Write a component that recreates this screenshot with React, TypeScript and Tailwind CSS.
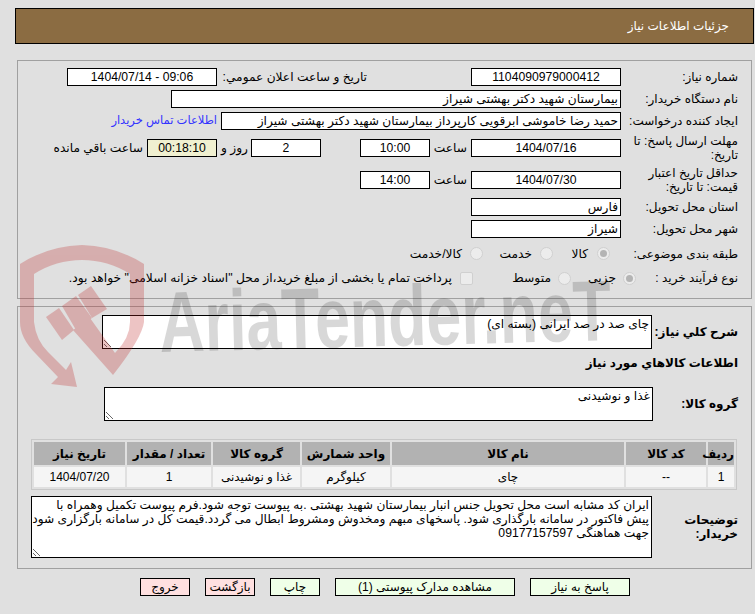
import React from 'react';

const font = { fontFamily: '"Liberation Sans", "DejaVu Sans", sans-serif' };

function Box({ value, w, center, bg, ltr }: { value: string; w: string; center?: boolean; bg?: string; ltr?: boolean }) {
  return (
    <input
      readOnly
      dir={ltr ? 'ltr' : undefined}
      value={value}
      className={`${w} h-[18px] shrink-0 border border-black px-[2px] text-[12.2px] leading-none text-black ${center ? 'text-center' : 'text-right'} ${bg ?? 'bg-white'}`}
    />
  );
}

function Row({ label, h, children }: { label: string; h: string; children?: React.ReactNode }) {
  return (
    <div className={`flex items-center ${h}`}>
      <div className="w-[117px] shrink-0 pl-[4px] text-[12px] leading-[14px] text-black">{label}</div>
      {children}
    </div>
  );
}

function Radio({ checked, className }: { checked?: boolean; className?: string }) {
  return (
    <span className={`flex h-[13px] w-[13px] shrink-0 items-center justify-center rounded-full border border-[#d0d0d0] bg-[#ececec] ${className ?? ''}`}>
      {checked && <span className="h-[7px] w-[7px] rounded-full bg-[#b4b4b4]" />}
    </span>
  );
}

function Btn({ label, w, pink, className }: { label: string; w: string; pink?: boolean; className?: string }) {
  return (
    <button className={`${w} h-[18px] border border-black text-[12px] leading-none text-black ${pink ? 'bg-[#ffe0e0]' : 'bg-[#efffe8]'} ${className ?? ''}`}>
      {label}
    </button>
  );
}

function Watermark() {
  return (
    <div dir="ltr" className="pointer-events-none absolute left-0 top-0">
      <svg width="755" height="614" viewBox="0 0 755 614">
        <g fill="#be2828" opacity="0.27">
          <path d="M20 264 Q48 246 82 245 Q116 246 144 264 L144 322 Q142 338 113 375 L73 330 L90 318 L115 353 Q130 338 130 322 L130 274 Q108 260 82 260 Q56 260 34 274 L34 322 Q36 340 48 352 L66 370 L71 362 L77 387 L51 384 L58 377 L36 354 Q20 338 20 322 Z" />
          <path d="M46 317 L59 308 L74 330 L62 340 Z" />
          <path d="M62 306 L76 296 L92 318 L76 330 Z" />
          <path d="M78 295 L91 286 L107 309 L92 318 Z" />
        </g>
        <text
          x="160"
          y="352"
          transform="rotate(-1.5 160 352)"
          textLength="452"
          lengthAdjust="spacingAndGlyphs"
          fontFamily="Liberation Sans, sans-serif"
          fontWeight="700"
          fontSize="86"
          fill="#000"
          opacity="0.15"
        >
          AriaTender.neT
        </text>
      </svg>
    </div>
  );
}

const cols = ['w-[26px]', 'w-[80px]', 'w-[232px]', 'w-[88px]', 'w-[87px]', 'w-[84px]', 'w-[91px]'];
const heads = ['ردیف', 'کد کالا', 'نام کالا', 'واحد شمارش', 'گروه کالا', 'تعداد / مقدار', 'تاریخ نیاز'];
const cells = ['1', '--', 'چای', 'کیلوگرم', 'غذا و نوشیدنی', '1', '1404/07/20'];

export default function App() {
  return (
    <div dir="rtl" style={font} className="relative h-[614px] w-[755px] overflow-hidden bg-[#e0e0e0]">
      <div className="mr-[1px] ml-[15px] pt-[8px]">
        <div className="flex h-[36px] items-center border border-black bg-[#8b6c42] pr-[24px] text-[12px] text-white">
          جزئیات اطلاعات نیاز
        </div>
      </div>

      <div className="mr-[3px] mt-[16px] h-[239px] w-[735px] border border-[#a0a0a0] pr-[13px] pt-[7px]">
        <div className="flex flex-col">
          <Row label="شماره نیاز:" h="h-[18px]">
            <Box value="1104090979000412" w="w-[150px]" center />
            <div className="mr-[104px] w-[150px] shrink-0 text-[12.2px]">تاریخ و ساعت اعلان عمومي:</div>
            <Box value="1404/07/14 - 09:06" w="w-[150px]" center ltr />
          </Row>
          <div className="mt-[4px]">
            <Row label="نام دستگاه خریدار:" h="h-[18px]">
              <Box value="بیمارستان شهید دکتر بهشتی شیراز" w="w-[450px]" />
            </Row>
          </div>
          <div className="mt-[4px]">
            <Row label="ایجاد کننده درخواست:" h="h-[18px]">
              <Box value="حمید رضا خاموشی ابرقویی کارپرداز بیمارستان شهید دکتر بهشتی شیراز" w="w-[400px]" />
              <a className="mr-[4px] whitespace-nowrap text-[11.5px] text-[#3333ff]">اطلاعات تماس خریدار</a>
            </Row>
          </div>
          <div className="mt-[3px]">
            <Row label="مهلت ارسال پاسخ: تا تاریخ:" h="h-[30px]">
              <Box value="1404/07/16" w="w-[150px]" center />
              <span className="mr-[4px] w-[37px] text-[12.2px]">ساعت</span>
              <Box value="10:00" w="w-[70px]" center />
              <span className="w-[39px]" />
              <Box value="2" w="w-[70px]" center />
              <span className="mr-[3px] w-[31px] text-[12.2px]">روز و</span>
              <Box value="00:18:10" w="w-[70px]" center bg="bg-[#f0f0d0]" />
              <span className="mr-[4px] whitespace-nowrap text-[12.2px]">ساعت باقي مانده</span>
            </Row>
          </div>
          <div className="mt-[2px]">
            <Row label="حداقل تاریخ اعتبار قیمت: تا تاریخ:" h="h-[30px]">
              <Box value="1404/07/30" w="w-[150px]" center />
              <span className="mr-[4px] w-[37px] text-[12.2px]">ساعت</span>
              <Box value="14:00" w="w-[70px]" center />
            </Row>
          </div>
          <div className="mt-[3px]">
            <Row label="استان محل تحویل:" h="h-[18px]">
              <Box value="فارس" w="w-[150px]" />
            </Row>
          </div>
          <div className="mt-[4px]">
            <Row label="شهر محل تحویل:" h="h-[18px]">
              <Box value="شیراز" w="w-[150px]" />
            </Row>
          </div>
          <div className="mt-[4px]">
            <Row label="طبقه بندی موضوعی:" h="h-[24px]">
              <div className="flex items-center text-[12.2px]">
                <Radio checked className="mr-[11px]" />
                <span className="mr-[9px] w-[35px]">کالا</span>
                <Radio />
                <span className="mr-[8px] w-[49px]">خدمت</span>
                <Radio />
                <span className="mr-[8px] whitespace-nowrap">کالا/خدمت</span>
              </div>
            </Row>
          </div>
          <div className="flex h-[24px] items-center">
            <div className="w-[102px] shrink-0 text-[12px]">نوع فرآیند خرید :</div>
            <div className="flex items-center text-[12.3px]">
              <Radio checked />
              <span className="mr-[7px] w-[45px]">جزیی</span>
              <Radio />
              <span className="mr-[7px] w-[78px]">متوسط</span>
              <span className="h-[13px] w-[13px] shrink-0 rounded-[2px] border border-[#d0d0d0] bg-[#ececec]" />
              <span className="mr-[8px] whitespace-nowrap">
                پرداخت تمام یا بخشی از مبلغ خرید،از محل "اسناد خزانه اسلامی" خواهد بود.
              </span>
            </div>
          </div>
        </div>
      </div>

      <div className="mr-[3px] mt-[7px] h-[263px] w-[735px] border border-[#a0a0a0] pr-[13px] pt-[8px]">
        <div className="flex h-[34px] items-center">
          <div className="w-[86px] shrink-0 text-[12px] font-bold">شرح کلي نیاز:</div>
          <textarea readOnly defaultValue="چای صد در صد ایرانی (بسته ای)" className="h-[34px] w-[550px] border border-black bg-white px-[2px] py-[1px] text-[12.2px] leading-[15px]" />
        </div>
        <div className="mt-[7px] text-[12px] font-bold leading-[14px]">اطلاعات کالاهاي مورد نیاز</div>
        <div className="mt-[17px] flex h-[34px] items-center">
          <div className="w-[85px] shrink-0 text-[12px] font-bold">گروه کالا:</div>
          <textarea readOnly defaultValue="غذا و نوشیدنی" className="h-[34px] w-[549px] border border-black bg-white px-[2px] py-[1px] text-[12.2px] leading-[15px]" />
        </div>
        <table className="mr-[1px] mt-[18px] w-[706px] table-fixed border-separate border-spacing-[2px] border border-[#c8c8c8] text-center text-[12px]">
          <thead>
            <tr>
              {heads.map((h, i) => (
                <th key={h} className={`${cols[i]} h-[23px] bg-[#b2b2b2] p-0 font-bold`}>{h}</th>
              ))}
            </tr>
          </thead>
          <tbody>
            <tr>
              {cells.map((c, i) => (
                <td key={i} className="h-[20px] bg-[#f5f5f5] p-0">{c}</td>
              ))}
            </tr>
          </tbody>
        </table>
        <div className="mt-[6px] flex h-[62px] items-center">
          <div className="w-[86px] shrink-0 text-[12px] font-bold leading-[14px]">توضیحات خریدار:</div>
          <textarea
            readOnly
            defaultValue="ایران کد مشابه است محل تحویل جنس انبار بیمارستان شهید بهشتی .به پیوست توجه شود.فرم پیوست تکمیل وهمراه با پیش فاکتور در سامانه بارگذاری شود. پاسخهای مبهم ومخدوش ومشروط ابطال می گردد.قیمت کل در سامانه بارگزاری شود جهت هماهنگی 09177157597"
            className="h-[62px] w-[621px] overflow-hidden border border-black bg-white py-[1px] pl-0 pr-[2px] text-[12.2px] leading-[14px]"
          />
        </div>
      </div>

      <div className="mr-[125px] mt-[9px] flex">
        <Btn label="پاسخ به نیاز" w="w-[100px]" />
        <Btn label="مشاهده مدارک پیوستی (1)" w="w-[180px]" className="mr-[15px]" />
        <Btn label="چاپ" w="w-[50px]" className="mr-[15px]" />
        <Btn label="بازگشت" w="w-[50px]" pink className="mr-[15px]" />
        <Btn label="خروج" w="w-[50px]" pink className="mr-[15px]" />
      </div>

      <Watermark />
    </div>
  );
}
